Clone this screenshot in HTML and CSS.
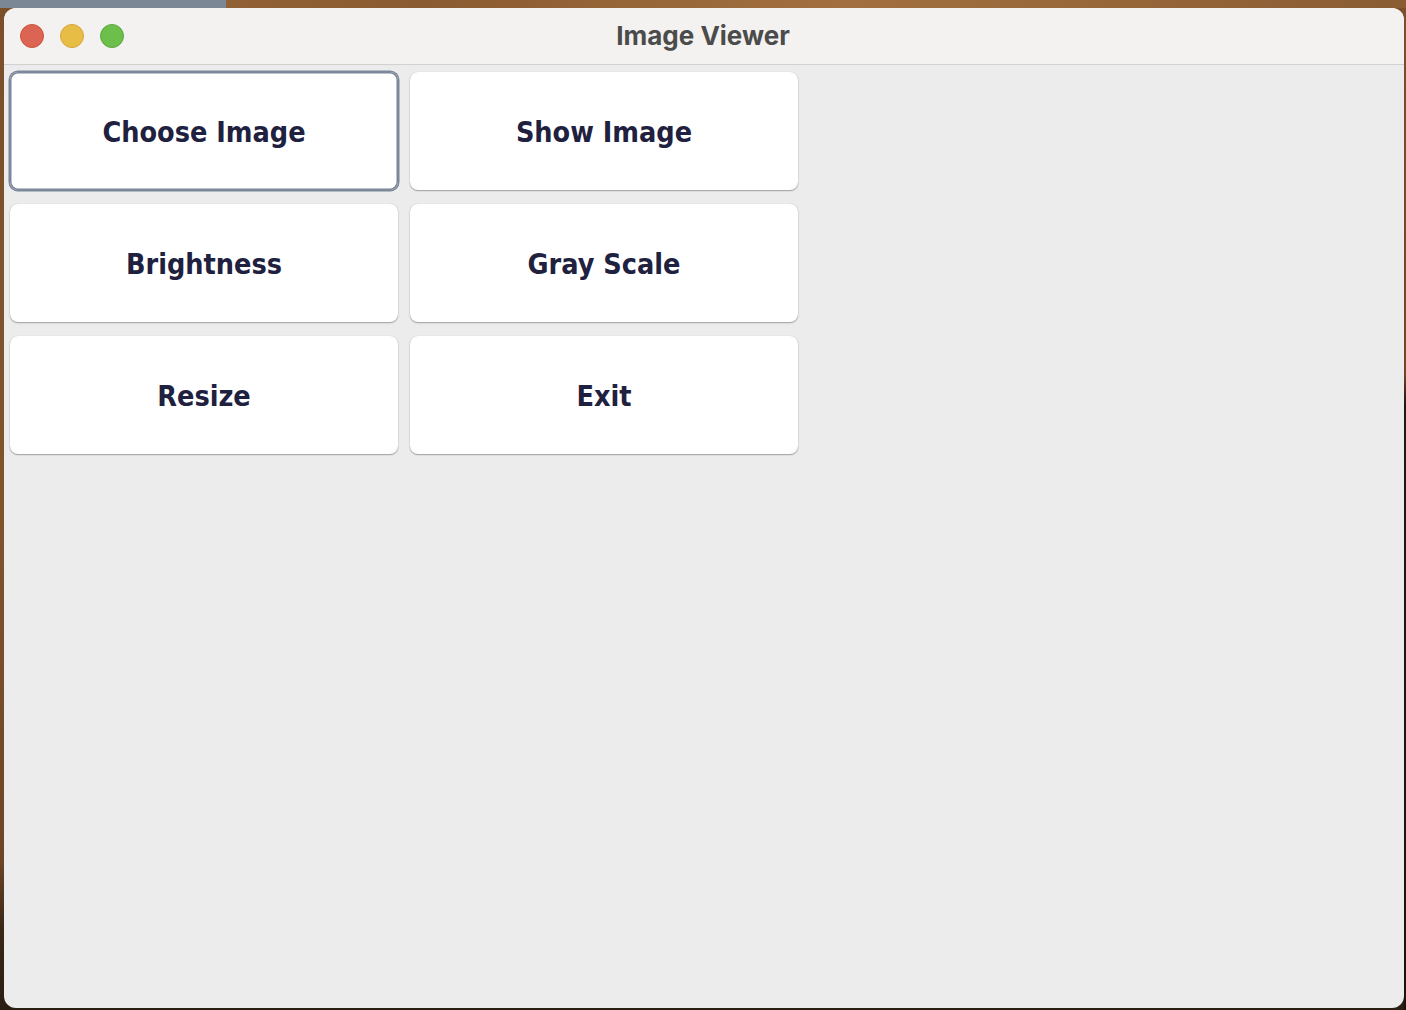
FILE: index.html
```html
<!DOCTYPE html>
<html lang="en">
<head>
<meta charset="utf-8">
<title>Image Viewer</title>
<link rel="stylesheet" href="styles.css">
</head>
<body>
<div class="window">
  <header class="titlebar">
    <div class="lights">
      <span class="light red"></span>
      <span class="light yellow"></span>
      <span class="light green"></span>
    </div>
    <div class="title">Image Viewer</div>
    <div class="spacer"></div>
  </header>
  <main class="content">
    <div class="grid">
      <button class="btn focused">Choose Image</button>
      <button class="btn">Show Image</button>
      <button class="btn">Brightness</button>
      <button class="btn">Gray Scale</button>
      <button class="btn">Resize</button>
      <button class="btn">Exit</button>
    </div>
  </main>
</div>
</body>
</html>
```
FILE: styles.css
```css
html, body {
  margin: 0;
  padding: 0;
  width: 1406px;
  height: 1010px;
  overflow: hidden;
}

body {
  background:
    linear-gradient(#7b8794, #7b8794) 0 0 / 226px 8px no-repeat,
    linear-gradient(90deg, #9a6a3c 0%, #8a5a30 30%, #a27040 60%, #8a5c32 100%) 0 0 / 100% 8px no-repeat,
    linear-gradient(180deg, #7a4f2a 0%, #6e4626 37%, #22170f 40%, #1c130c 100%) 1404px 0 / 2px 100% no-repeat,
    linear-gradient(180deg, #7a4f2a 0%, #80552e 50%, #6e4626 85%, #3a2818 92%, #2a1d12 100%);
  font-family: "DejaVu Sans Condensed", "DejaVu Sans", sans-serif;
}

.window {
  margin: 8px 2px 2px 4px;
  width: 1400px;
  height: 1000px;
  border-radius: 12px;
  overflow: hidden;
  background: #ececec;
  display: flex;
  flex-direction: column;
}

.titlebar {
  height: 56px;
  flex: none;
  background: #f3f2f0;
  border-bottom: 1px solid #d2d1cf;
  display: grid;
  grid-template-columns: 1fr auto 1fr;
  align-items: center;
}

.lights {
  display: flex;
  gap: 16px;
  padding-left: 16px;
}

.light {
  width: 24px;
  height: 24px;
  border-radius: 50%;
  box-sizing: border-box;
}

.red { background: #dc6452; border: 1px solid #c8533f; }
.yellow { background: #e8bd45; border: 1px solid #d3a538; }
.green { background: #6cbf4a; border: 1px solid #5aa93c; }

.title {
  font-family: Inter, "Noto Sans", sans-serif;
  font-weight: 700;
  font-size: 26px;
  color: #4b4b4b;
  padding-bottom: 1px;
  margin-left: -2px;
}

.content {
  flex: 1;
  padding: 7px 0 0 6px;
}

.grid {
  display: grid;
  grid-template-columns: repeat(2, 388px);
  grid-auto-rows: 118px;
  column-gap: 12px;
  row-gap: 14px;
}

.btn {
  appearance: none;
  border: none;
  margin: 0;
  padding: 2px 0 0 0;
  background: #ffffff;
  border-radius: 8px;
  box-shadow: 0 1px 1.5px rgba(0, 0, 0, 0.32), 0 0 1px rgba(0, 0, 0, 0.18);
  font-family: "DejaVu Sans Condensed", "DejaVu Sans", sans-serif;
  font-weight: 700;
  font-size: 28.5px;
  color: #20203f;
  display: flex;
  align-items: center;
  justify-content: center;
}

.btn.focused {
  box-shadow: 0 0 0 1.5px #7d879a, inset 0 0 0 1.5px #7d879a;
}
```
